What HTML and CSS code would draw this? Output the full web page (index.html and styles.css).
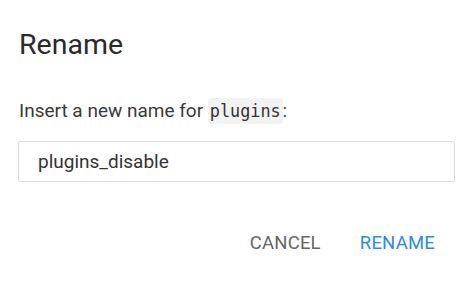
FILE: index.html
```html
<!DOCTYPE html>
<html>
<head>
<meta charset="utf-8">
<link rel="stylesheet" href="styles.css">
</head>
<body>
<div class="dialog">
  <h1 class="title">Rename</h1>
  <p class="message">Insert a new name for <code class="code">plugins</code>:</p>
  <div class="field">plugins_disable</div>
  <div class="actions">
    <span class="btn btn-cancel">CANCEL</span>
    <span class="btn btn-primary">RENAME</span>
  </div>
</div>
</body>
</html>
```

FILE: styles.css
```css
html, body {
  margin: 0;
  padding: 0;
  background: #ffffff;
}
body {
  font-family: Roboto, "Liberation Sans", sans-serif;
  color: #333333;
}
.dialog {
  padding: 28px 19px 0 18px;
  display: flex;
  flex-direction: column;
}
.title {
  margin: 0;
  font-size: 28.5px;
  line-height: 34px;
  font-weight: 400;
  color: #2a2a2a;
  padding-left: 1px;
}
.message {
  margin: 35px 0 0 0;
  font-size: 19px;
  line-height: 28px;
  color: #3a3a3a;
  padding-left: 1px;
}
.code {
  font-family: "DejaVu Sans Mono", monospace;
  font-size: 16.8px;
  background: #f2f2f2;
  padding: 3px 2px;
  border-radius: 3px;
  color: #333333;
}
.field {
  margin-top: 16px;
  height: 41px;
  box-sizing: border-box;
  border: 1px solid #dcdcdc;
  border-radius: 2px;
  padding: 0 19px;
  font-size: 19px;
  line-height: 39px;
  color: #333333;
}
.actions {
  display: flex;
  justify-content: flex-end;
  gap: 39px;
  margin-top: 49px;
  padding-right: 20px;
}
.btn {
  font-size: 18.5px;
  line-height: 24px;
  letter-spacing: 0.2px;
}
.btn-cancel {
  color: #666666;
}
.btn-primary {
  color: #2a8be6;
}
```
